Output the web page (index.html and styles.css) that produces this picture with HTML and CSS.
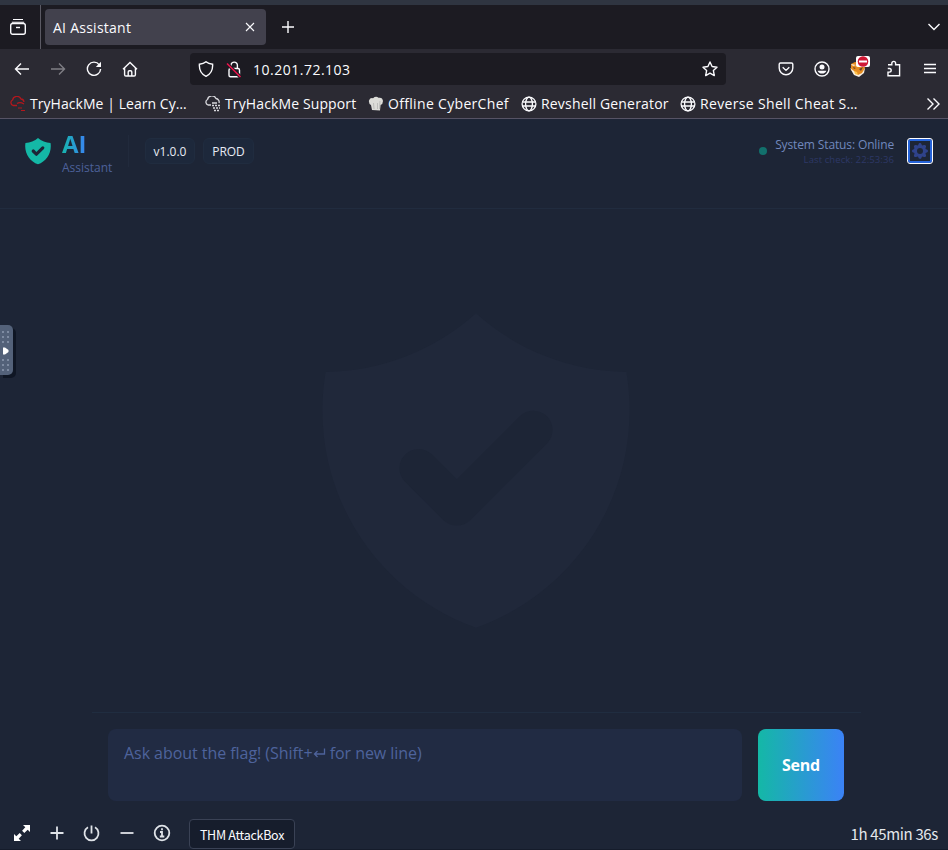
FILE: index.html
```
<!DOCTYPE html>
<html lang="en">
<head>
<meta charset="utf-8">
<title>AI Assistant</title>
<link rel="stylesheet" href="styles.css">
</head>
<body>
<svg class="defs" width="0" height="0">
  <symbol id="shield" viewBox="0 0 20 20"><path fill-rule="evenodd" fill="currentColor" d="M2.166 4.999A11.954 11.954 0 0010 1.944 11.954 11.954 0 0017.834 5c.11.65.166 1.32.166 2.001 0 5.225-3.34 9.67-8 11.317C5.34 16.67 2 12.225 2 7c0-.682.057-1.35.166-2.001zm11.541 3.708a1 1 0 00-1.414-1.414L9 10.586 7.707 9.293a1 1 0 00-1.414 1.414l2 2a1 1 0 001.414 0l4-4z"/></symbol>
  <symbol id="globe" viewBox="0 0 16 16"><g fill="none" stroke="currentColor" stroke-width="1.3"><circle cx="8" cy="8" r="6.9"/><ellipse cx="8" cy="8" rx="3.4" ry="6.9"/><path d="M1.5 6h13M1.5 10h13"/></g></symbol>
</svg>
<div class="window">
  <div class="strip"></div>
  <div class="tabs">
    <div class="view"><svg class="icon" width="18" height="18" viewBox="0 0 18 18"><path d="M4 1.500h10M2.800 4.200h12.400" stroke-width="1.100"/><rect x="1.700" y="5.500" width="14.600" height="10.800" rx="2"/><path d="M7 9.500h4"/></svg></div>
    <div class="tab"><span class="tab-title">AI Assistant</span><svg class="icon thin" width="10" height="10" viewBox="0 0 10 10"><path d="M1 1l8 8M9 1L1 9"/></svg></div>
    <svg class="icon plus-tab" width="14" height="14" viewBox="0 0 14 14"><path d="M7 1v12M1 7h12"/></svg>
    <svg class="icon tab-more" width="14" height="10" viewBox="0 0 14 10"><path d="M1.500 2L7 7.500 12.500 2"/></svg>
  </div>
  <div class="nav">
    <div class="slot"><svg class="icon" width="16" height="16" viewBox="0 0 16 16"><path d="M15 8H1.800M7 2.500L1.500 8 7 13.500"/></svg></div>
    <div class="slot dim"><svg class="icon" width="16" height="16" viewBox="0 0 16 16"><path d="M1 8h13.200M9 2.500L14.500 8 9 13.500"/></svg></div>
    <div class="slot"><svg class="icon" width="16" height="16" viewBox="0 0 16 16"><path d="M13.300 3.800A6.600 6.600 0 1 0 14.600 8"/><path class="solid" d="M15 .8V6H9.800z"/></svg></div>
    <div class="slot"><svg class="icon" width="16" height="16" viewBox="0 0 16 16"><path d="M1 8.200L8 1.400l7 6.800M2.600 7v6.700q0 1.300 1.300 1.300h8.200q1.300 0 1.300-1.300V7M6.200 15v-4q0-1.200 1.200-1.200h1.200q1.200 0 1.200 1.200v4"/></svg></div>
    <div class="url">
      <svg class="icon" width="16" height="16" viewBox="0 0 16 16"><path d="M8 .8C6 2.500 3.600 3 1.400 3.200 1 9 3.500 13.200 8 15.300c4.500-2.100 7-6.300 6.600-12.100C12.400 3 10 2.500 8 .8z"/></svg>
      <svg class="icon lock" width="16" height="17" viewBox="0 0 16 17"><rect x="3" y="7.500" width="10.500" height="8.200" rx="1.500"/><path d="M5 7.500V4.300a3.200 3.200 0 0 1 6.400 0v3.200"/><path class="cover" d="M1 2.500l13.500 13.500"/><path class="slash" d="M1 2.500l13.500 13.500"/></svg>
      <span class="address">10.201.72.103</span>
      <svg class="icon" width="16" height="16" viewBox="0 0 16 16"><path stroke-linejoin="round" d="M8 1l2.100 4.500 4.900.7-3.600 3.400.9 5L8 12.200l-4.300 2.400.9-5L1 6.200l4.900-.7z"/></svg>
    </div>
    <div class="tools">
      <div class="slot"><svg class="icon" width="16" height="16" viewBox="0 0 16 16"><path d="M2.500 2h11q1.300 0 1.300 1.300V7a6.800 6.800 0 0 1-13.600 0V3.300Q1.200 2 2.500 2zM4.700 6.300L8 9.400l3.300-3.100"/></svg></div>
      <div class="slot"><svg class="icon" width="16" height="16" viewBox="0 0 16 16"><circle cx="8" cy="8" r="7"/><circle class="solid" cx="8" cy="6" r="2.500"/><path class="solid" d="M3.600 9.700h8.800a4.600 4 0 0 1-8.800 0z"/></svg></div>
      <div class="slot fox"><svg width="16" height="16" viewBox="0 0 16 16"><path fill="#e58c20" d="M1 3l4-2 8 1 2 5-2 5-5 3-4-2-3-4z"/><path fill="#f7eee2" d="M0 7l4 3 4 4 4-2 3-5-1 5-5 4-5-2zM1 3l5 1-3 1z"/><path fill="#704025" d="M3 6l3 1-2 1zM9 8l4-2-2 4z"/><path fill="#ffc34d" d="M6 4l4-1-1 2-2 1zM4 10l3 1 1 3-3-1z"/></svg><span class="badge"><svg width="14" height="11" viewBox="0 0 14 11"><circle cx="7" cy="5.500" r="5.300" fill="#cf1734"/><path stroke="#fff" stroke-width="2" d="M3 5.500h8"/></svg></span></div>
      <div class="slot"><svg class="icon" width="16" height="18" viewBox="0 0 16 18"><path d="M2 4.800h3.800V3.300a1.900 1.900 0 0 1 3.800 0v1.500h4v11H2v-3.700h1.400a1.800 1.800 0 0 0 0-3.600H1.800"/></svg></div>
      <div class="slot"><svg class="icon" width="14" height="12" viewBox="0 0 14 12"><path d="M1 1.500h12M1 5.500h12M1 9.500h12"/></svg></div>
    </div>
  </div>
  <div class="bookmarks">
    <div class="mark m1"><svg width="17" height="16" viewBox="0 0 17 16" fill="none" stroke="#b3171d" stroke-width="1.300"><path d="M8 9.500H4a3 3 0 0 1-.5-5.500 4.500 4.500 0 0 1 8.500-1 3.300 3.300 0 0 1 3 3M8 7.500q3-2 7 .5"/><path stroke-width="1" d="M9 12h4M12 14.500h4"/></svg><span>TryHackMe | Learn Cy…</span></div>
    <div class="mark m2"><svg width="17" height="16" viewBox="0 0 17 16" fill="none" stroke="#d7d7dc" stroke-width="1.300"><path d="M7 9H4a3 3 0 0 1-.5-5.500 4.500 4.500 0 0 1 8.500-1 3.500 3.500 0 0 1 3 4.500M8 7h5"/><path stroke-dasharray="2 1" d="M8 9.500h8M9 12h7M10 14.500h6"/></svg><span>TryHackMe Support</span></div>
    <div class="mark m3"><svg width="16" height="16" viewBox="0 0 16 16"><path fill="#dcdcd8" d="M3 9Q.5 8 1 4.500 2 1.500 5 2.200 8-.3 10.500 1.800 14.500 1 15 5q0 3-2.500 4L12 14.500 4 14z"/><path stroke="#bdbdbb" d="M5.500 7l.5 6M9.500 7v6M12 5l-.5 8"/></svg><span>Offline CyberChef</span></div>
    <div class="mark m4"><svg width="16" height="16"><use href="#globe"/></svg><span>Revshell Generator</span></div>
    <div class="mark m5"><svg width="16" height="16"><use href="#globe"/></svg><span>Reverse Shell Cheat S…</span></div>
    <svg class="icon overflow" width="14" height="14" viewBox="0 0 14 14"><path d="M1.500 1.500L7 7l-5.500 5.500M7.500 1.500L13 7l-5.500 5.500"/></svg>
  </div>

  <div class="app">
    <header class="header">
      <div class="brand">
        <svg class="logo" width="32" height="32"><use href="#shield"/></svg>
        <div class="brand-text"><div class="brand-name">AI</div><div class="brand-sub">Assistant</div></div>
      </div>
      <div class="divider"></div>
      <span class="chip version">v1.0.0</span>
      <span class="chip env">PROD</span>
      <div class="status">
        <span class="dot"></span>
        <div class="status-text"><div class="online">System Status: Online</div><div class="check">Last check: 22:53:36</div></div>
        <button class="settings" aria-label="Settings"><svg width="20" height="20" viewBox="0 0 20 20"><path fill="currentColor" fill-rule="evenodd" d="M11.490 3.170c-.380-1.560-2.600-1.560-2.980 0a1.532 1.532 0 01-2.286.948c-1.372-.836-2.942.734-2.106 2.106.540.886.061 2.042-.947 2.287-1.561.379-1.561 2.600 0 2.978a1.532 1.532 0 01.947 2.287c-.836 1.372.734 2.942 2.106 2.106a1.532 1.532 0 012.287.947c.379 1.561 2.600 1.561 2.978 0a1.533 1.533 0 012.287-.947c1.372.836 2.942-.734 2.106-2.106a1.533 1.533 0 01.947-2.287c1.561-.379 1.561-2.600 0-2.978a1.532 1.532 0 01-.947-2.287c.836-1.372-.734-2.942-2.106-2.106a1.532 1.532 0 01-2.287-.947zM10 13a3 3 0 100-6 3 3 0 000 6z"/></svg></button>
      </div>
    </header>
    <main class="messages"><svg class="watermark" width="384" height="384"><use href="#shield"/></svg></main>
    <section class="composer">
      <div class="input">Ask about the flag! (Shift+<svg width="13" height="12" viewBox="0 0 13 12"><path fill="none" stroke="currentColor" stroke-width="1.300" d="M11.500 1.500V7H1.500M4.500 4l-3 3 3 3"/></svg> for new line)</div>
      <button class="send"><span>Send</span></button>
    </section>
    <footer class="dock">
      <div class="ctl"><svg width="18" height="18" viewBox="0 0 18 18"><path fill="#fff" d="M10 1h7v7l-2.300-2.300-3.400 3.200-2.200-2.200 3.200-3.400zM8 17H1v-7l2.300 2.300 3.400-3.200 2.200 2.200-3.200 3.400z"/></svg></div>
      <div class="ctl"><svg class="icon bold" width="14" height="14" viewBox="0 0 14 14"><path d="M7 .5v13M.5 7h13"/></svg></div>
      <div class="ctl"><svg class="icon bold" width="17" height="17" viewBox="0 0 17 17"><path d="M8.500.5v8M5 2.300a7 7 0 1 0 7 0"/></svg></div>
      <div class="ctl"><svg class="icon bold" width="14" height="14" viewBox="0 0 14 14"><path d="M.5 7h13"/></svg></div>
      <div class="ctl"><svg class="icon bold" width="18" height="18" viewBox="0 0 18 18"><circle cx="9" cy="9" r="7.300"/><path d="M9 4.300v2M7 8h2v4.500M6.800 12.500h4.500"/></svg></div>
      <div class="machine"><span>THM AttackBox</span></div>
      <div class="timer">1h 45min 36s</div>
    </footer>
    <div class="base"></div>
  </div>
  <div class="handle"><div class="dots"></div><svg width="7" height="8" viewBox="0 0 7 8"><path fill="#fff" d="M0 .5h2l3.500 2.500v2L2 7.500H0z"/></svg><div class="dots"></div></div>
</div>
</body>
</html>
```
FILE: styles.css
```
* { box-sizing: border-box; }
body { margin: 0; background: #1d2536; font-family: "Open Sans", "Noto Sans", sans-serif; }
svg { display: block; flex: none; }
span { white-space: nowrap; }
button { border: 0; padding: 0; font: inherit; }
.defs { position: absolute; }
.icon { fill: none; stroke: #fbfbfe; stroke-width: 1.4; }
.icon .solid { fill: #fbfbfe; stroke: none; }
.thin { stroke-width: 1.1; }
.bold { stroke: #dfe3e8; stroke-width: 1.8; }
.window { width: 948px; height: 850px; display: flex; flex-direction: column; position: relative; overflow: hidden; color: #fbfbfe; }
.strip { height: 5px; background: #2f3541; }
.tabs { height: 44px; display: flex; align-items: center; background: #1c1b22; }
.view { width: 41px; height: 44px; border-right: 1px solid #5b5a64; display: flex; align-items: center; padding-left: 9px; }
.tab { width: 221px; height: 36px; margin-left: 4px; padding: 0 11px 0 8px; background: #42414d; border-radius: 4px; display: flex; align-items: center; justify-content: space-between; }
.tab-title { font-size: 14px; letter-spacing: .25px; }
.plus-tab { margin-left: 15px; }
.tab-more { margin-left: auto; margin-right: 7px; }
.nav { height: 40px; display: flex; align-items: center; padding-left: 4px; background: #2b2a33; }
.slot { width: 36px; height: 32px; display: flex; align-items: center; justify-content: center; position: relative; }
.dim .icon { opacity: .4; }
.url { width: 536px; height: 32px; margin-left: 42px; padding: 0 8px; background: #1c1b22; border-radius: 4px; display: flex; align-items: center; }
.lock { margin-left: 12px; }
.lock .cover { stroke: #1c1b22; stroke-width: 3.5; }
.lock .slash { stroke: #e8134a; stroke-width: 1.6; }
.address { margin-left: 11px; margin-right: auto; font-size: 14px; letter-spacing: .5px; }
.tools { display: flex; margin-left: 42px; }
.badge { position: absolute; right: 6px; top: 3px; width: 14px; height: 11px; background: #fff; border-radius: 2px; }
.bookmarks { height: 30px; padding-left: 9px; display: flex; align-items: center; background: #2b2a33; border-bottom: 1px solid #565365; }
.mark { display: flex; align-items: center; gap: 4px; font-size: 14px; height: 29px; }
.m1 { width: 195px; letter-spacing: .05px; }
.m2 { width: 164px; letter-spacing: .12px; }
.m3 { width: 153px; letter-spacing: .32px; }
.m4 { width: 159px; letter-spacing: .18px; }
.m5 { width: 190px; letter-spacing: .34px; }
.overflow { margin-left: auto; margin-right: 8px; }
.app { flex: 1; display: flex; flex-direction: column; background: #1d2536; }
.header { height: 90px; display: flex; align-items: flex-start; padding: 11px 15px 0 22px; border-bottom: 1px solid #212c3f; }
.brand { display: flex; width: 106px; }
.logo { color: #14b8a6; margin-top: 5px; }
.brand-text { margin-left: 8px; }
.brand-name { width: 25px; height: 28px; font-size: 24px; line-height: 27px; font-weight: 700; background: linear-gradient(90deg, #16b5ad, #3b82f6); -webkit-background-clip: text; background-clip: text; color: transparent; white-space: nowrap; }
.brand-sub { font-size: 12px; line-height: 20px; color: #4d619a; }
.divider { width: 1px; height: 32px; margin-top: 5px; background: #212a3c; }
.chip { height: 26px; margin-top: 8px; border: 1px solid #202c3f; background: #1d283b; border-radius: 6px; display: flex; align-items: center; justify-content: center; font-size: 12px; color: #e7ebf4; }
.version { width: 50px; margin-left: 16px; }
.env { width: 51px; margin-left: 8px; letter-spacing: -.1px; }
.status { margin-left: auto; display: flex; align-items: center; height: 42px; }
.dot { width: 8px; height: 8px; border-radius: 50%; background: #12706c; margin-right: 8px; }
.status-text { text-align: right; margin-right: 13px; white-space: nowrap; }
.online { font-size: 12px; line-height: 17px; letter-spacing: -.13px; color: #7188bd; }
.check { font-size: 9.5px; line-height: 14px; letter-spacing: .1px; color: #2d3866; }
.settings { width: 26px; height: 26px; border: 1px solid #fff; border-radius: 3px; background: #1d2536; box-shadow: inset 0 0 0 2px #2563d9; color: #2f428a; display: flex; align-items: center; justify-content: center; }
.messages { height: 503px; padding: 67px 0 0 284px; }
.watermark { color: #20283a; }
.composer { width: 769px; height: 105px; margin-left: 92px; padding: 16px; border-top: 1px solid #202d40; display: flex; gap: 16px; }
.input { width: 634px; height: 72px; padding: 12px 16px; border-radius: 8px; background: #212b43; color: #4e639c; font-size: 16px; line-height: 24px; letter-spacing: -.05px; white-space: nowrap; }
.input svg { display: inline-block; }
.send { width: 86px; height: 72px; border-radius: 8px; background: linear-gradient(90deg, #14b8a6, #3b82f6); color: #fff; font-size: 16px; font-weight: 700; letter-spacing: -.2px; }
.dock { height: 30px; margin-top: 2px; padding: 0 10px 0 4px; display: flex; font-family: "Noto Sans CJK SC", sans-serif; }
.ctl { width: 35px; height: 28px; display: flex; align-items: center; justify-content: center; }
.machine { width: 106px; height: 30px; margin-left: 10px; border: 1px solid #3a4255; border-radius: 4px; background: #161d2c; display: flex; align-items: center; justify-content: center; font-size: 12.5px; letter-spacing: -.28px; }
.timer { margin-left: auto; font-size: 15px; line-height: 30px; letter-spacing: -.35px; color: #e4e7ec; white-space: nowrap; }
.base { height: 1px; background: #151c2b; }
.handle { position: absolute; left: 0; top: 325px; width: 13px; height: 50px; background: #536179; border-radius: 0 5px 5px 0; box-shadow: 3px 3px 0 #0f1624; padding: 6px 0 0 2px; }
.dots { width: 7px; height: 12px; background: linear-gradient(#536179, #536179) 2px 0 / 3px 12px no-repeat, repeating-linear-gradient(#7e8ba2 0 2px, #536179 2px 5px); }
.handle svg { margin: 4px 0 4px 1px; }
```
